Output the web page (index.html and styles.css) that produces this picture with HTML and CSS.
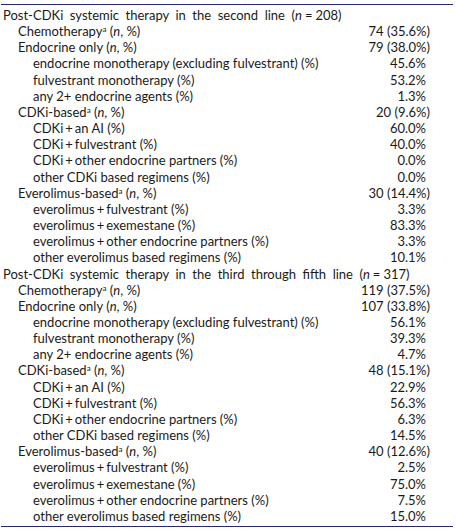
FILE: index.html
```html
<!DOCTYPE html>
<html lang="en">
<head>
    <meta charset="UTF-8">
    <meta name="viewport" content="width=device-width, initial-scale=1.0">
    <title>Post-CDKi systemic therapy</title>
    <link rel="stylesheet" href="styles.css">
</head>
<body>
<div class="wrap">
<table class="tbl">
<tr class="head"><td colspan="2">Post-CDKi systemic therapy in the second line (<i>n</i><span class="eq">=</span>208)</td></tr>
<tr><td class="l1">Chemotherapy<sup>a</sup> (<i>n</i>, %)</td><td class="val">74 (35.6%)</td></tr>
<tr><td class="l1">Endocrine only (<i>n</i>, %)</td><td class="val">79 (38.0%)</td></tr>
<tr><td class="l2">endocrine monotherapy (excluding fulvestrant) (%)</td><td class="val pct">45.6%</td></tr>
<tr><td class="l2">fulvestrant monotherapy (%)</td><td class="val pct">53.2%</td></tr>
<tr><td class="l2">any 2+ endocrine agents (%)</td><td class="val pct">1.3%</td></tr>
<tr><td class="l1">CDKi-based<sup>a</sup> (<i>n</i>, %)</td><td class="val">20 (9.6%)</td></tr>
<tr><td class="l2">CDKi<span class="op">+</span>an AI (%)</td><td class="val pct">60.0%</td></tr>
<tr><td class="l2">CDKi<span class="op">+</span>fulvestrant (%)</td><td class="val pct">40.0%</td></tr>
<tr><td class="l2">CDKi<span class="op">+</span>other endocrine partners (%)</td><td class="val pct">0.0%</td></tr>
<tr><td class="l2">other CDKi based regimens (%)</td><td class="val pct">0.0%</td></tr>
<tr><td class="l1">Everolimus-based<sup>a</sup> (<i>n</i>, %)</td><td class="val">30 (14.4%)</td></tr>
<tr><td class="l2">everolimus<span class="op">+</span>fulvestrant (%)</td><td class="val pct">3.3%</td></tr>
<tr><td class="l2">everolimus<span class="op">+</span>exemestane (%)</td><td class="val pct">83.3%</td></tr>
<tr><td class="l2">everolimus<span class="op">+</span>other endocrine partners (%)</td><td class="val pct">3.3%</td></tr>
<tr><td class="l2">other everolimus based regimens (%)</td><td class="val pct">10.1%</td></tr>
<tr class="head"><td colspan="2">Post-CDKi systemic therapy in the third through fifth line (<i>n</i><span class="eq">=</span>317)</td></tr>
<tr><td class="l1">Chemotherapy<sup>a</sup> (<i>n</i>, %)</td><td class="val">119 (37.5%)</td></tr>
<tr><td class="l1">Endocrine only (<i>n</i>, %)</td><td class="val">107 (33.8%)</td></tr>
<tr><td class="l2">endocrine monotherapy (excluding fulvestrant) (%)</td><td class="val pct">56.1%</td></tr>
<tr><td class="l2">fulvestrant monotherapy (%)</td><td class="val pct">39.3%</td></tr>
<tr><td class="l2">any 2+ endocrine agents (%)</td><td class="val pct">4.7%</td></tr>
<tr><td class="l1">CDKi-based<sup>a</sup> (<i>n</i>, %)</td><td class="val">48 (15.1%)</td></tr>
<tr><td class="l2">CDKi<span class="op">+</span>an AI (%)</td><td class="val pct">22.9%</td></tr>
<tr><td class="l2">CDKi<span class="op">+</span>fulvestrant (%)</td><td class="val pct">56.3%</td></tr>
<tr><td class="l2">CDKi<span class="op">+</span>other endocrine partners (%)</td><td class="val pct">6.3%</td></tr>
<tr><td class="l2">other CDKi based regimens (%)</td><td class="val pct">14.5%</td></tr>
<tr><td class="l1">Everolimus-based<sup>a</sup> (<i>n</i>, %)</td><td class="val">40 (12.6%)</td></tr>
<tr><td class="l2">everolimus<span class="op">+</span>fulvestrant (%)</td><td class="val pct">2.5%</td></tr>
<tr><td class="l2">everolimus<span class="op">+</span>exemestane (%)</td><td class="val pct">75.0%</td></tr>
<tr><td class="l2">everolimus<span class="op">+</span>other endocrine partners (%)</td><td class="val pct">7.5%</td></tr>
<tr><td class="l2">other everolimus based regimens (%)</td><td class="val pct">15.0%</td></tr>
</table>
</div>
</body>
</html>
```

FILE: styles.css
```css
* {
margin: 0;
padding: 0;
box-sizing: border-box;
}

body {
background-color: #ffffff;
font-family: Lato, "Open Sans", sans-serif;
font-size: 13px;
color: #1a1a1a;
}

.wrap {
margin: 4px 3px 0 1px;
padding: 2px 0;
border-top: 1.5px solid #262a6b;
border-bottom: 1.5px solid #262a6b;
}

.tbl {
width: 100%;
border-collapse: collapse;
}

.tbl td {
height: 16.16px;
line-height: 16.16px;
padding: 0;
white-space: nowrap;
vertical-align: middle;
}

.head td {
padding-left: 2px;
word-spacing: 3.2px;
}

.tbl .l1 {
padding-left: 17px;
}

.tbl .l2 {
padding-left: 32px;
}

.tbl .val {
text-align: right;
padding-right: 23px;
}

.tbl .val.pct {
padding-right: 27px;
}

.op {
margin: 0 2px;
}

.eq {
margin: 0 3px;
}

sup {
font-size: 8px;
line-height: 0;
vertical-align: 4px;
}
```
